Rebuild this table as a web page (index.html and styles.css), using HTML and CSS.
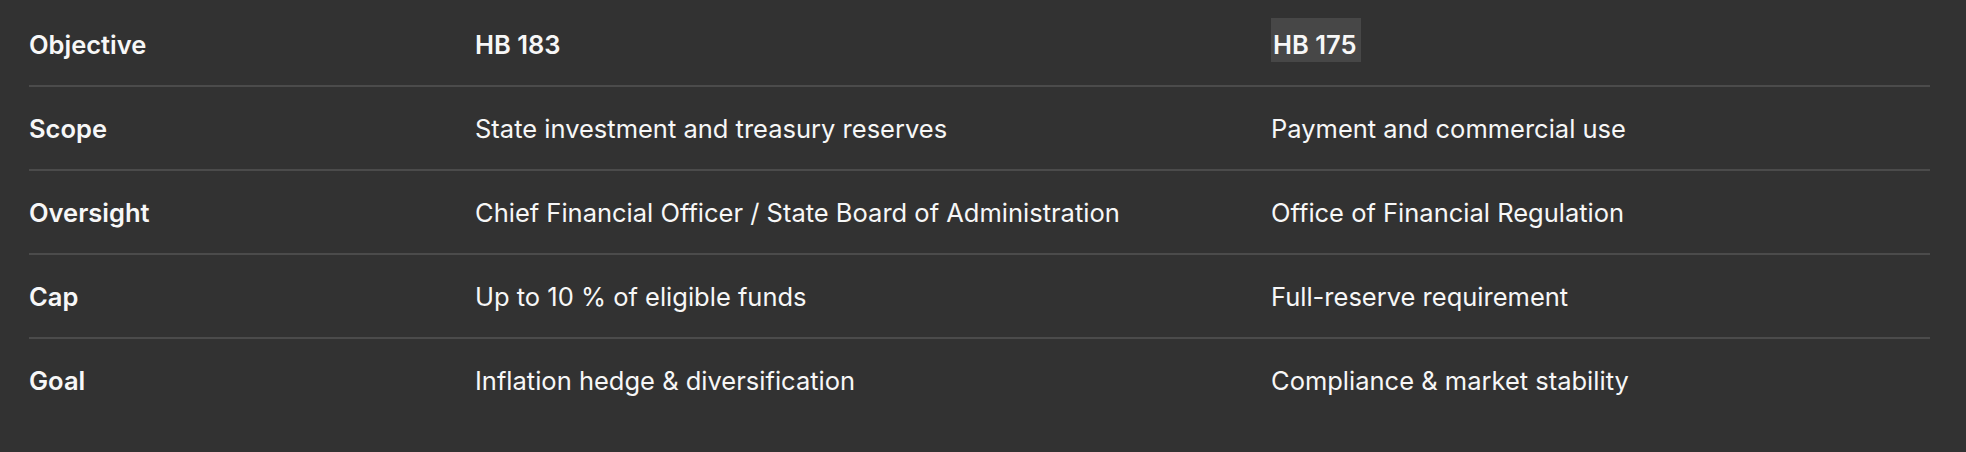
FILE: index.html
```html
<!DOCTYPE html>
<html lang="en">
<head>
<meta charset="utf-8">
<title>HB 183 vs HB 175</title>
<link rel="stylesheet" href="styles.css">
</head>
<body>
<div class="wrap">
  <div class="table">
    <div class="row head">
      <div class="cell key">Objective</div>
      <div class="cell">HB 183</div>
      <div class="cell"><span class="mark">HB 175</span></div>
    </div>
    <div class="row">
      <div class="cell key">Scope</div>
      <div class="cell">State investment and treasury reserves</div>
      <div class="cell">Payment and commercial use</div>
    </div>
    <div class="row">
      <div class="cell key">Oversight</div>
      <div class="cell">Chief Financial Officer / State Board of Administration</div>
      <div class="cell">Office of Financial Regulation</div>
    </div>
    <div class="row">
      <div class="cell key">Cap</div>
      <div class="cell">Up to 10 % of eligible funds</div>
      <div class="cell">Full-reserve requirement</div>
    </div>
    <div class="row last">
      <div class="cell key">Goal</div>
      <div class="cell">Inflation hedge &amp; diversification</div>
      <div class="cell">Compliance &amp; market stability</div>
    </div>
  </div>
</div>
</body>
</html>
```
FILE: styles.css
```css
html, body {
  margin: 0;
  padding: 0;
  background: #323232;
}
body {
  font-family: Inter, "Noto Sans", sans-serif;
  color: #f7f7f7;
  font-size: 25.5px;
}
.wrap {
  padding: 3px 36px 0 29px;
  height: 449px;
}
.table {
  display: flex;
  flex-direction: column;
}
.row {
  display: grid;
  grid-template-columns: 446px 796px 1fr;
  height: 82px;
  align-items: center;
  border-bottom: 2px solid #4b4b4b;
}
.row.last {
  border-bottom: none;
}
.head .cell {
  font-weight: 600;
}
.cell.key {
  font-weight: 600;
}
.mark {
  background: #474747;
  padding: 11px 4px 2px 2px;
}
```
